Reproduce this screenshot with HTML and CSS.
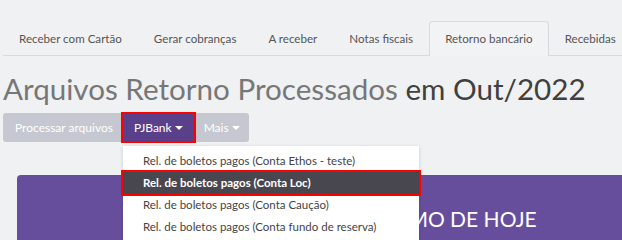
FILE: index.html
```html
<!DOCTYPE html>
<html lang="pt-BR">
<head>
<meta charset="utf-8">
<title>Retorno bancário</title>
<link rel="stylesheet" href="styles.css">
</head>
<body>
<div class="page">
  <ul class="tabs">
    <li class="tab">Receber com Cartão</li>
    <li class="tab">Gerar cobranças</li>
    <li class="tab">A receber</li>
    <li class="tab">Notas fiscais</li>
    <li class="tab active">Retorno bancário</li>
    <li class="tab">Recebidas</li>
  </ul>
  <h1 class="title"><span class="muted">Arquivos Retorno Processados</span> em Out/2022</h1>
  <div class="toolbar">
    <div class="btn-group">
      <button class="btn btn-gray">Processar arquivos</button>
      <div class="dd">
        <button class="btn btn-purple marked">PJBank<span class="caret"></span></button>
        <ul class="menu">
          <li class="item">Rel. de boletos pagos (Conta Ethos - teste)</li>
          <li class="item selected">Rel. de boletos pagos (Conta Loc)</li>
          <li class="item">Rel. de boletos pagos (Conta Caução)</li>
          <li class="item">Rel. de boletos pagos (Conta fundo de reserva)</li>
        </ul>
      </div>
      <button class="btn btn-gray last">Mais<span class="caret"></span></button>
    </div>
  </div>
  <div class="panel">
    <div class="panel-title">RESUMO DE HOJE</div>
  </div>
</div>
</body>
</html>
```
FILE: styles.css
```css
html, body {
  margin: 0;
  padding: 0;
  background: #f0f1f3;
  font-family: Lato, "Open Sans", sans-serif;
  overflow: hidden;
}
.page {
  padding: 0 0 0 3px;
  height: 240px;
  overflow: hidden;
}
.tabs {
  list-style: none;
  margin: 0;
  padding: 21px 0 0 0;
  display: flex;
  border-bottom: 1px solid #d9dadd;
  white-space: nowrap;
}
.tab {
  padding: 10px 15px;
  line-height: 13px;
  font-size: 11.6px;
  color: #555;
  border: 1px solid transparent;
  border-bottom: none;
  border-radius: 4px 4px 0 0;
  margin-bottom: -1px;
}
.tab.active {
  border-color: #d9dadd;
  background: #f2f3f5;
  padding-bottom: 11px;
}
.title {
  margin: 16px 0 0 0;
  font-size: 29.6px;
  line-height: 34px;
  font-weight: normal;
  color: #404040;
  white-space: nowrap;
}
.title .muted {
  color: #777;
}
.toolbar {
  margin-top: 7px;
}
.btn-group {
  display: flex;
}
.btn {
  font-family: Lato, "Open Sans", sans-serif;
  font-size: 12px;
  color: #fff;
  border: none;
  height: 29px;
  padding: 0 12px;
  margin: 0;
  display: flex;
  align-items: center;
}
.btn-gray {
  background: #c5c8d0;
  border-radius: 3px 0 0 3px;
  padding: 0 9px 0 12px;
}
.btn-gray.last {
  border-radius: 0 3px 3px 0;
  padding: 0 9px;
}
.btn-purple {
  background: #5a3f8a;
  padding: 0 12px;
}
.marked {
  outline: 2px solid #f00;
  outline-offset: -1px;
}
.caret {
  display: inline-block;
  width: 0;
  height: 0;
  margin-left: 3px;
  border-top: 4px solid #fff;
  border-left: 4px solid transparent;
  border-right: 4px solid transparent;
}
.dd {
  position: relative;
  z-index: 2;
}
.menu {
  position: absolute;
  left: 1px;
  top: 33px;
  width: 296px;
  margin: 0;
  padding: 4px 0 3px;
  list-style: none;
  background: #fff;
  box-shadow: 0 1px 4px rgba(0,0,0,0.15);
}
.item {
  height: 22px;
  line-height: 22px;
  padding: 0 20px;
  font-size: 11.5px;
  color: #444;
  white-space: nowrap;
}
.item.selected {
  background: #48474f;
  color: #fff;
  font-weight: bold;
  outline: 2px solid #f00;
  outline-offset: 0;
}
.panel {
  margin: 33px 0 0 14px;
  background: #664e9d;
  border-radius: 4px 0 0 0;
  height: 65px;
}
.panel-title {
  color: #fff;
  font-size: 21px;
  text-align: center;
  padding-top: 31px;
  padding-left: 254px;
}
```
